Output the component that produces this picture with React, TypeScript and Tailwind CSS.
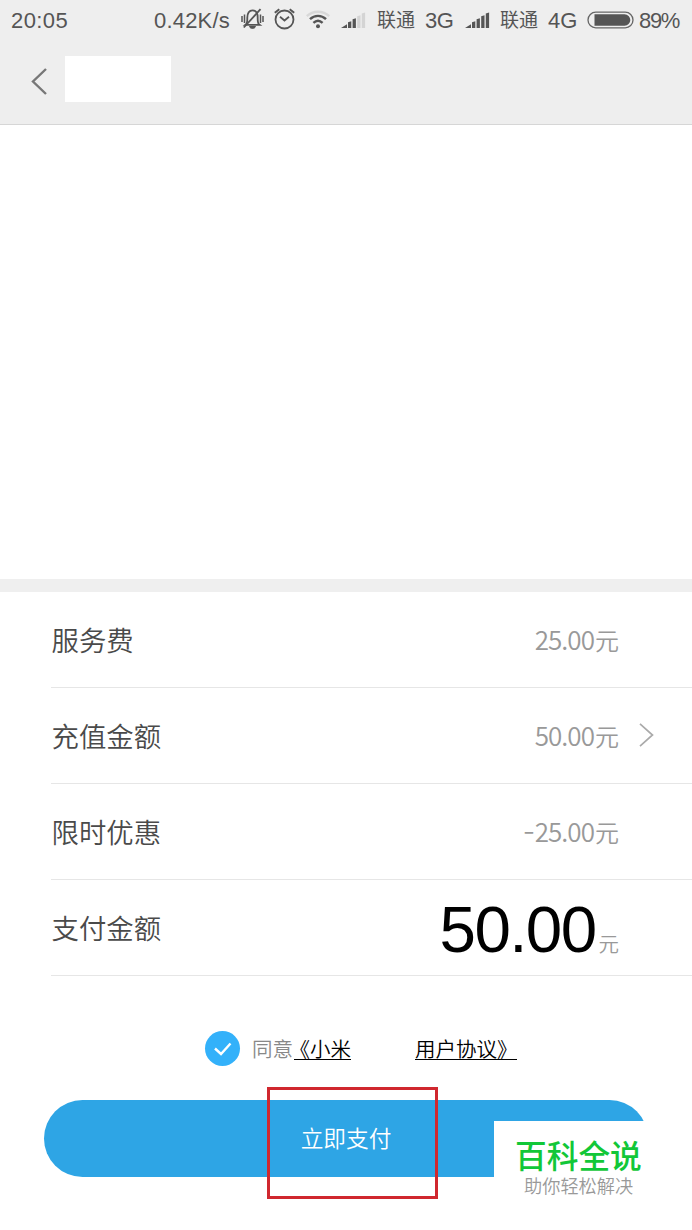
import type { ReactNode } from "react";

const cjk = "font-['Noto_Sans_CJK_SC',sans-serif]";

function MuteBell() {
  return (
    <svg className="h-[22px] w-[23px] shrink-0" viewBox="0 0 23 22" fill="none" stroke="#555" strokeWidth="1.8">
      <path d="M4.500 16.800c2-1.400 1.800-3 1.800-7C6.300 5 8.300 2.300 11.500 2.300s5.200 2.700 5.200 7.500c0 4-.2 5.600 1.800 7z" />
      <path d="M8.500 18.500c.5 2.500 5.500 2.500 6 0z" fill="#555" strokeWidth="1" />
      <path d="M2.800 19.500 19.500 1.200" />
      <path d="M1 8v6M3.500 6.500v8.500M22 8v6M19.500 6.500v8.500" strokeWidth="1.500" />
    </svg>
  );
}

function AlarmClock() {
  return (
    <svg className="h-[22px] w-[21px] shrink-0" viewBox="0 0 21 22" fill="none" stroke="#555" strokeWidth="1.8">
      <circle cx="10.500" cy="11.500" r="9" />
      <path d="M6 8.800l4.500 3.700L15 8.800" />
      <path d="M.8 4.800 5.300 1.300M20.200 4.800 15.700 1.300" strokeWidth="2" />
    </svg>
  );
}

function Wifi() {
  return (
    <svg className="h-[20px] w-[24px] shrink-0" viewBox="0 0 24 20" fill="none" strokeWidth="2.400">
      <path d="M.8 6.200C7 .2 17 .2 23.200 6.200" stroke="#d8d8d8" />
      <path d="M4 9.200c4.600-4.400 11.400-4.400 16 0" stroke="#555" />
      <path d="M7.400 12.900c2.800-2.600 6.400-2.600 9.200 0" stroke="#555" />
      <circle cx="12" cy="16.300" r="2" fill="#555" />
    </svg>
  );
}

function Signal({ weak = false }: { weak?: boolean }) {
  const off = weak ? "#d4d4d4" : "#555";
  return (
    <svg className="h-[17px] w-[25px] shrink-0" viewBox="0 0 25 17">
      <path d="M0 16 6 12.300V16z" fill="#555" />
      <path d="M7 10.300 10.300 9.200V16H7z" fill="#555" />
      <path d="M11.600 7.300 14.900 6.200V16h-3.300z" fill="#555" />
      <path d="M16.200 4.300 19.500 3.300V16h-3.300z" fill={off} />
      <path d="M20.800 1.500 24.100.5V16h-3.300z" fill={off} />
    </svg>
  );
}

function Battery() {
  return (
    <svg className="h-[18px] w-[47px] shrink-0" viewBox="0 0 47 18">
      <rect x="1" y="1.200" width="45" height="15.600" rx="7.800" fill="none" stroke="#666" strokeWidth="1.300" />
      <path d="M7.500 3.200H37.500a5.800 5.800 0 0 1 0 11.600H7.500z" fill="#555" />
    </svg>
  );
}

function Row({ label, children }: { label: string; children: ReactNode }) {
  return (
    <div className="ml-[51px] flex h-[96px] items-center justify-between border-b border-[#e6e6e6] pr-[73px]">
      <span className="mt-[-2px] pl-[0.500px] text-[27.400px] font-[350] leading-[40px] text-[#4a4a4a]">{label}</span>
      {children}
    </div>
  );
}

function Amount({ value, negative = false }: { value: string; negative?: boolean }) {
  return (
    <span className="flex items-baseline leading-[40px] text-[#999]">
      {negative && <span className="text-[34px] font-light leading-[20px]">-</span>}
      <span className="text-[26px] font-[350] tracking-[-0.950px]">{value}</span>
      <span className="ml-px text-[24px] font-[350]">元</span>
    </span>
  );
}

export default function App() {
  return (
    <div className={`flex h-[1230px] w-[692px] flex-col overflow-hidden bg-white ${cjk}`}>
      <header className="h-[125px] shrink-0 border-b border-[#d6d6d6] bg-[#eee]">
        <div className="flex h-[40px] items-center whitespace-nowrap pl-[11px] font-['Liberation_Sans','Noto_Sans_CJK_SC',sans-serif] text-[22px] text-[#555]">
          <span className="w-[143px] tracking-[0.400px]">20:05</span>
          <span className="w-[87px] tracking-[0.200px]">0.42K/s</span>
          <div className="flex w-[136px] items-center">
            <div className="mt-[-2px] w-[33px]"><MuteBell /></div>
            <div className="mt-[-2px] w-[32px]"><AlarmClock /></div>
            <div className="w-[35px]"><Wifi /></div>
            <Signal weak />
          </div>
          <span className="mt-[3px] w-[48px] text-[19px]">联通</span>
          <span className="w-[40px] tracking-[-0.500px]">3G</span>
          <div className="w-[35px]"><Signal /></div>
          <span className="mt-[3px] w-[48px] text-[19px]">联通</span>
          <span className="w-[39px]">4G</span>
          <div className="w-[52px]"><Battery /></div>
          <span className="tracking-[-1.300px]">89%</span>
        </div>
        <div className="flex pl-[31px] pt-4">
          <svg className="mt-[12px] h-[27px] w-[16px]" viewBox="0 0 16 27" fill="none" stroke="#777" strokeWidth="2.400">
            <path d="M15 1 2 13.500 15 26" />
          </svg>
          <div className="ml-[18px] h-[46px] w-[106px] bg-white" />
        </div>
      </header>

      <div className="h-[454px] shrink-0" />
      <div className="h-[13px] shrink-0 bg-[#efefef]" />

      <section>
        <Row label="服务费">
          <Amount value="25.00" />
        </Row>
        <Row label="充值金额">
          <div className="mr-[-35px] flex items-center">
            <Amount value="50.00" />
            <svg className="ml-[20px] mt-[-2px] h-[24px] w-[15px]" viewBox="0 0 15 24" fill="none" stroke="#aaa" strokeWidth="1.700">
              <path d="M1 .8 13.500 12 1 23.200" />
            </svg>
          </div>
        </Row>
        <Row label="限时优惠">
          <Amount value="25.00" negative />
        </Row>
        <Row label="支付金额">
          <span className="-mb-[3px] mt-[15px] flex items-baseline leading-[80px]">
            <span className="mr-[3px] font-['Liberation_Sans',sans-serif] text-[65.500px] tracking-[-1.600px] text-black">50.00</span>
            <span className="text-[20.500px] font-[350] text-[#999]">元</span>
          </span>
        </Row>
      </section>

      <div className="mt-[55px] flex h-[35px] shrink-0 items-center whitespace-nowrap pl-[205px] text-[20.500px] font-[350]">
        <span className="flex size-[35px] items-center justify-center rounded-full bg-[#33b1fa]">
          <svg className="h-[14px] w-[18px]" viewBox="0 0 18 14" fill="none" stroke="white" strokeWidth="2.400">
            <path d="M1 6.500 7 12 16.500 1.500" />
          </svg>
        </span>
        <span className="ml-[12px] w-[42px] text-[#888]">同意</span>
        <span className="flex h-[23px] w-[57px] justify-end border-b border-black leading-[22px] text-black">
          《小米
        </span>
        <span className="ml-[64px] h-[23px] w-[102px] border-b border-black leading-[22px] text-black">用户协议》</span>
      </div>

      <div className="relative mt-[34px] h-[77px] w-[692px] shrink-0 pl-[44px]">
        <button className="h-[77px] w-[604px] rounded-full bg-[#2ea5e5] text-[22.700px] font-[350] text-white">
          立即支付
        </button>
        <div className="absolute left-[267px] top-[-13px] h-[112px] w-[171px] border-[3px] border-[#d0282f]" />
        <div className="absolute left-[494px] top-[21px] flex h-[90px] w-[198px] flex-col bg-white pl-[21px] pt-[12px]">
          <span className="text-[31.700px] font-medium leading-[42px] text-[#12c738]">百科全说</span>
          <span className="pl-[9px] text-[18.200px] font-[350] leading-[20px] text-[#999]">助你轻松解决</span>
        </div>
      </div>
    </div>
  );
}
